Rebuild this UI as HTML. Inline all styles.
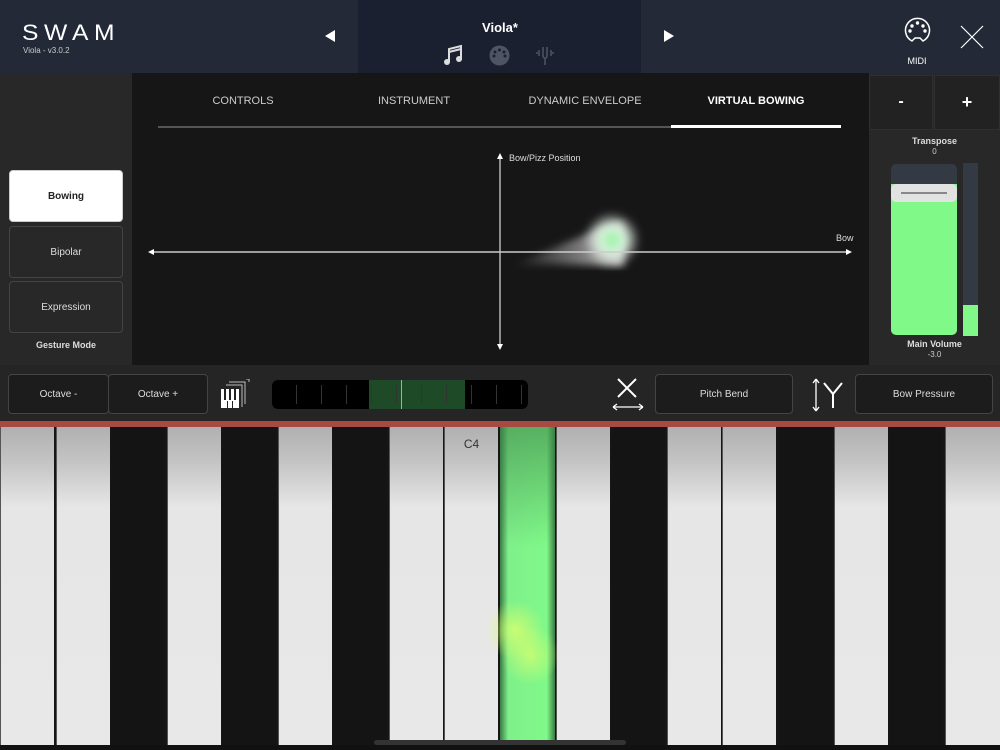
<!DOCTYPE html>
<html><head><meta charset="utf-8"><style>
*{margin:0;padding:0;box-sizing:border-box}
body{width:1000px;height:750px;overflow:hidden;background:#161616;font-family:"Liberation Sans",sans-serif;position:relative;color:#ddd}
.a{position:absolute}
.btn{position:absolute;border:1px solid #444;border-radius:4px;display:flex;align-items:center;justify-content:center;font-size:10px;color:#ddd}
.key{position:absolute;top:427px;height:318px;width:54px}
.w{background:linear-gradient(#b0b0b0 0px,#c4c4c4 35px,#e6e6e6 80px,#e8e8e8 100%);border-left:1px solid #555}
.b{background:#141414}
</style></head><body>
<div class="a" style="left:0;top:0;width:358px;height:73px;background:#232937"></div>
<div class="a" style="left:358px;top:0;width:283px;height:73px;background:#1b2030"></div>
<div class="a" style="left:641px;top:0;width:359px;height:73px;background:#232937"></div>
<div class="a" style="left:22px;top:20px;font-size:22px;letter-spacing:5px;color:#fff;transform:scaleX(1.12);transform-origin:left">SWAM</div>
<div class="a" style="left:23px;top:46px;font-size:8px;color:#ccc">Viola - v3.0.2</div>
<div class="a" style="left:325px;top:30px;width:0;height:0;border-top:6px solid transparent;border-bottom:6px solid transparent;border-right:10px solid #fff"></div>
<div class="a" style="left:664px;top:30px;width:0;height:0;border-top:6px solid transparent;border-bottom:6px solid transparent;border-left:10px solid #fff"></div>
<div class="a" style="left:458px;top:20px;width:84px;text-align:center;font-size:13px;font-weight:bold;color:#fff">Viola*</div>
<svg class="a" style="left:443px;top:44px" width="22" height="22" viewBox="0 0 22 22"><path d="M6 18V5l12-3v13" stroke="#ddd" stroke-width="2" fill="none"/><path d="M6 8l12-3" stroke="#ddd" stroke-width="2"/><circle cx="4" cy="18" r="3" fill="#ddd"/><circle cx="16" cy="15" r="3" fill="#ddd"/></svg>
<svg class="a" style="left:489px;top:45px" width="21" height="21"><circle cx="10.5" cy="10.5" r="10" fill="#4e5463"/><g fill="#1b2030"><circle cx="10.5" cy="5" r="1.5"/><circle cx="6" cy="7" r="1.5"/><circle cx="15" cy="7" r="1.5"/><circle cx="5" cy="11" r="1.5"/><circle cx="16" cy="11" r="1.5"/></g></svg>
<svg class="a" style="left:536px;top:44px" width="18" height="22"><path d="M7 3v9a2 2 0 0 0 4 0V3M9 14v7M3 6v6M15 6v6M1 8v2M17 8v2" stroke="#4e5463" stroke-width="1.5" fill="none"/></svg>
<svg class="a" style="left:904px;top:17px" width="27" height="29"><path d="M8 24A12 12 0 1 1 19 24L16 21h-5z" stroke="#fff" stroke-width="1.5" fill="none"/><g fill="#fff"><circle cx="13.5" cy="6" r="1.7"/><circle cx="8" cy="9" r="1.7"/><circle cx="19" cy="9" r="1.7"/><circle cx="6" cy="14" r="1.7"/><circle cx="21" cy="14" r="1.7"/></g></svg>
<div class="a" style="left:900px;top:56px;width:34px;text-align:center;font-size:9px;color:#fff">MIDI</div>
<svg class="a" style="left:960px;top:25px" width="24" height="24"><path d="M1 1L23 23M23 1L1 23" stroke="#fff" stroke-width="1.2"/></svg>
<div class="a" style="left:0;top:73px;width:132px;height:292px;background:#282828"></div>
<div class="btn" style="left:9px;top:170px;width:114px;height:52px;background:#fff;color:#222;border-color:#ccc;font-weight:bold">Bowing</div>
<div class="btn" style="left:9px;top:226px;width:114px;height:52px;background:#282828">Bipolar</div>
<div class="btn" style="left:9px;top:281px;width:114px;height:52px;background:#282828">Expression</div>
<div class="a" style="left:9px;top:340px;width:114px;text-align:center;font-size:9px;font-weight:bold;color:#ddd">Gesture Mode</div>
<div class="a" style="left:158px;top:95px;width:170px;text-align:center;font-size:11px;color:#ccc">CONTROLS</div>
<div class="a" style="left:329px;top:95px;width:170px;text-align:center;font-size:11px;color:#ccc">INSTRUMENT</div>
<div class="a" style="left:500px;top:95px;width:170px;text-align:center;font-size:11px;color:#ccc">DYNAMIC ENVELOPE</div>
<div class="a" style="left:671px;top:95px;width:170px;text-align:center;font-size:11px;color:#fff;font-weight:bold">VIRTUAL BOWING</div>
<div class="a" style="left:158px;top:126px;width:513px;height:2px;background:#555"></div>
<div class="a" style="left:671px;top:125px;width:170px;height:3px;background:#fff"></div>
<svg class="a" style="left:132px;top:140px" width="737" height="225">
<defs><radialGradient id="g"><stop offset="0" stop-color="#8ef59a"/><stop offset=".45" stop-color="#d8f0dc"/><stop offset="1" stop-color="#fff" stop-opacity="0"/></radialGradient>
<linearGradient id="t" x1="0" x2="1"><stop offset="0" stop-color="#fff" stop-opacity="0"/><stop offset="1" stop-color="#fff" stop-opacity=".7"/></linearGradient>
<filter id="bl"><feGaussianBlur stdDeviation="4"/></filter></defs>
<line x1="368" y1="15" x2="368" y2="208" stroke="#ddd" stroke-width="1.2"/>
<path d="M365 19l3-6 3 6zM365 204l3 6 3-6z" fill="#fff"/>
<path d="M380 125 L465 90 L490 82 L492 126 L420 124z" fill="url(#t)" filter="url(#bl)"/>
<circle cx="480" cy="100" r="28" fill="url(#g)" filter="url(#bl)"/>
<line x1="18" y1="112" x2="718" y2="112" stroke="#ccc" stroke-width="1.5"/>
<path d="M22 109l-6 3 6 3zM714 109l6 3-6 3z" fill="#fff"/>
<text x="377" y="21" font-size="9" fill="#ddd" font-family="Liberation Sans">Bow/Pizz Position</text>
<text x="704" y="101" font-size="9" fill="#ddd" font-family="Liberation Sans">Bow</text>
</svg>
<div class="a" style="left:869px;top:73px;width:131px;height:292px;background:#282828"></div>
<div class="a" style="left:869px;top:75px;width:64px;height:55px;background:#222;border:1px solid #2f2f2f;color:#fff;font-size:16px;text-align:center;line-height:52px;font-weight:bold">-</div>
<div class="a" style="left:934px;top:75px;width:66px;height:55px;background:#222;border:1px solid #2f2f2f;color:#fff;font-size:18px;text-align:center;line-height:52px;font-weight:bold">+</div>
<div class="a" style="left:869px;top:136px;width:131px;text-align:center;font-size:9px;font-weight:bold;color:#ddd">Transpose</div>
<div class="a" style="left:869px;top:147px;width:131px;text-align:center;font-size:8px;color:#ccc">0</div>
<div class="a" style="left:891px;top:164px;width:66px;height:171px;background:#343a44;border-radius:5px;overflow:hidden"><div class="a" style="left:0;top:20px;width:66px;height:151px;background:#80f989"></div><div class="a" style="left:0;top:20px;width:66px;height:18px;background:#e2e2e2;border-radius:5px"></div><div class="a" style="left:10px;top:28px;width:46px;height:2px;background:#888"></div></div>
<div class="a" style="left:963px;top:163px;width:15px;height:173px;background:#343a44"></div>
<div class="a" style="left:963px;top:305px;width:15px;height:31px;background:#80f989"></div>
<div class="a" style="left:869px;top:339px;width:131px;text-align:center;font-size:9px;font-weight:bold;color:#ddd">Main Volume</div>
<div class="a" style="left:869px;top:350px;width:131px;text-align:center;font-size:8px;color:#ccc">-3.0</div>
<div class="a" style="left:0;top:365px;width:1000px;height:56px;background:#252525"></div>
<div class="btn" style="left:8px;top:374px;width:101px;height:40px;background:#1c1c1c">Octave -</div>
<div class="btn" style="left:108px;top:374px;width:100px;height:40px;background:#1c1c1c">Octave +</div>
<svg class="a" style="left:220px;top:379px" width="30" height="30"><path d="M6 6h16v22M9 3h16v22M26 0h3v3" stroke="#bbb" fill="none"/><rect x="1" y="10" width="18" height="19" fill="#fff"/><g fill="#222"><rect x="4" y="10" width="2" height="11"/><rect x="9" y="10" width="2" height="11"/><rect x="14" y="10" width="2" height="11"/><rect x="7" y="22" width="1" height="7"/><rect x="12" y="22" width="1" height="7"/></g></svg>
<div class="a" style="left:272px;top:380px;width:256px;height:29px;background:#000;border-radius:6px;overflow:hidden">
<div class="a" style="left:97px;top:0;width:96px;height:29px;background:#1f4a28"></div>
<div class="a" style="left:129px;top:-6px;width:1px;height:40px;background:#aaa"></div>
<div style="position:absolute;left:0;top:5px;width:256px;height:19px;background:repeating-linear-gradient(90deg,transparent 0 24px,#333 24px 25px)"></div></div>
<svg class="a" style="left:610px;top:377px" width="36" height="36"><path d="M8 2L26 20M26 2L8 20" stroke="#fff" stroke-width="2"/><path d="M3 30h30M3 30l4-3M3 30l4 3M33 30l-4-3M33 30l-4 3" stroke="#fff" stroke-width="1.3" fill="none"/></svg>
<div class="btn" style="left:655px;top:374px;width:138px;height:40px;background:#1c1c1c">Pitch Bend</div>
<svg class="a" style="left:808px;top:377px" width="36" height="36"><path d="M8 2v32M8 2l-3 4M8 2l3 4M8 34l-3-4M8 34l3-4" stroke="#fff" stroke-width="1.3" fill="none"/><path d="M16 6l9 11 9-11M25 17v14" stroke="#fff" stroke-width="2" fill="none"/></svg>
<div class="btn" style="left:855px;top:374px;width:138px;height:40px;background:#1c1c1c">Bow Pressure</div>
<div class="a" style="left:0;top:421px;width:1000px;height:6px;background:#a84a44"></div>
<div class="key w" style="left:0"></div>
<div class="key w" style="left:56px"></div>
<div class="key b" style="left:111px"></div>
<div class="key w" style="left:167px"></div>
<div class="key b" style="left:222px"></div>
<div class="key w" style="left:278px"></div>
<div class="key b" style="left:333px"></div>
<div class="key w" style="left:389px"></div>
<div class="key w" style="left:444px"></div>
<div class="key" style="left:500px;width:55px;background:linear-gradient(90deg,#3a7a45,#7ff08a 15%,#80f989 85%,#3a7a45);"></div>
<div class="a" style="left:500px;top:427px;width:55px;height:120px;background:linear-gradient(rgba(60,130,70,.6),rgba(60,130,70,0))"></div>
<div class="key w" style="left:556px"></div>
<div class="key b" style="left:611px"></div>
<div class="key w" style="left:667px"></div>
<div class="key w" style="left:722px"></div>
<div class="key b" style="left:778px"></div>
<div class="key w" style="left:834px"></div>
<div class="key b" style="left:889px"></div>
<div class="key w" style="left:945px;width:55px"></div>
<div class="a" style="left:444px;top:437px;width:55px;text-align:center;font-size:12px;color:#333">C4</div>
<div class="a" style="left:485px;top:600px;width:60px;height:60px;border-radius:50%;background:radial-gradient(rgba(220,255,110,.8),rgba(220,255,110,0) 70%)"></div>
<div class="a" style="left:500px;top:625px;width:60px;height:60px;border-radius:50%;background:radial-gradient(rgba(220,255,110,.7),rgba(220,255,110,0) 70%)"></div>
<div class="a" style="left:0;top:745px;width:1000px;height:5px;background:#111"></div>
<div class="a" style="left:374px;top:740px;width:252px;height:5px;border-radius:3px;background:#333"></div>
</body></html>
